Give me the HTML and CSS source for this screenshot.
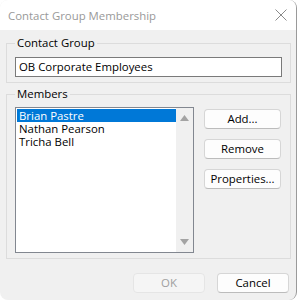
FILE: index.html
```html
<!DOCTYPE HTML>
<html>
<head>
  <meta http-equiv="Content-Type" content="text/html; charset=UTF-8">
  <title>Contact Group Membership</title>
  <link rel="stylesheet" href="styles.css">
</head>
<body>
  <div class="window">
    <div class="titlebar">
      <span class="title">Contact Group Membership</span>
      <svg class="close" width="12" height="12" viewBox="0 0 12 12">
        <path d="M0.5 0.5 L11.5 11.5 M11.5 0.5 L0.5 11.5" stroke="#8a8a8a" stroke-width="1" fill="none"/>
      </svg>
    </div>
    <div class="content">
      <fieldset class="group">
        <legend>Contact Group</legend>
        <div class="textbox">OB Corporate Employees</div>
      </fieldset>

      <fieldset class="group members">
        <legend>Members</legend>
        <div class="members-row">
          <div class="listbox">
            <div class="items">
              <div class="item selected">Brian Pastre</div>
              <div class="item">Nathan Pearson</div>
              <div class="item">Tricha Bell</div>
            </div>
            <div class="scrollbar">
              <svg width="9" height="6" viewBox="0 0 9 6"><path d="M4.5 0 L9 6 L0 6 Z" fill="#a3a3a3"/></svg>
              <svg width="9" height="6" viewBox="0 0 9 6"><path d="M0 0 L9 0 L4.5 6 Z" fill="#a3a3a3"/></svg>
            </div>
          </div>
          <div class="side-buttons">
            <div class="button">Add...</div>
            <div class="button">Remove</div>
            <div class="button">Properties...</div>
          </div>
        </div>
      </fieldset>

      <div class="footer">
        <div class="button wide disabled">OK</div>
        <div class="button wide">Cancel</div>
      </div>
    </div>
  </div>
</body>
</html>
```

FILE: styles.css
```css
body, html {
    margin: 0;
    padding: 0;
    background-color: #fff;
    font-family: "Open Sans", "Noto Sans", sans-serif;
    font-size: 11.4px;
    color: #000;
}

.window {
    width: 296px;
    height: 300px;
    border-right: 1px solid #9a9a9a;
    border-radius: 8px 8px 8px 8px;
    overflow: hidden;
    background-color: #f0f0f0;
    display: flex;
    flex-direction: column;
}

.titlebar {
    height: 30px;
    background-color: #fff;
    display: flex;
    align-items: center;
    justify-content: space-between;
    padding: 0 9px 0 8px;
    flex-shrink: 0;
}

.title {
    color: #999;
}

.content {
    flex: 1;
    padding-top: 6px;
}

.group {
    margin: 0 5px 0 6px;
    padding: 7px 8px 5px 8px;
    border: 1px solid #dcdcdc;
    min-width: 0;
}

.group legend {
    padding: 0 2px;
    margin-left: 0;
    line-height: 14px;
}

.members {
    margin-top: 4px;
    padding-top: 6px;
}

.textbox {
    height: 18px;
    border: 1px solid #7a7a7a;
    background-color: #fff;
    line-height: 18px;
    padding-left: 3px;
}

.members-row {
    display: flex;
    gap: 10px;
}

.listbox {
    width: 177px;
    height: 144px;
    border: 1px solid #828790;
    background-color: #fff;
    display: flex;
}

.items {
    flex: 1;
    padding-top: 1px;
}

.item {
    height: 13px;
    line-height: 13px;
    padding-left: 2px;
    margin-left: 1px;
}

.selected {
    background-color: #0078d7;
    color: #fff;
}

.scrollbar {
    width: 17px;
    background-color: #f0f0f0;
    display: flex;
    flex-direction: column;
    justify-content: space-between;
    align-items: center;
    padding: 7px 0 7px 0;
}

.side-buttons {
    display: flex;
    flex-direction: column;
    gap: 10px;
    padding-top: 2px;
}

.button {
    width: 75px;
    height: 18px;
    line-height: 18px;
    text-align: center;
    background-color: #fdfdfd;
    border: 1px solid #d6d6d6;
    border-bottom-color: #bcbcbc;
    border-radius: 4px;
}

.footer {
    display: flex;
    justify-content: flex-end;
    gap: 12px;
    padding: 14px 7px 0 0;
}

.wide {
    width: 70px;
}

.disabled {
    background-color: #f5f5f5;
    border-color: #e5e5e5;
    color: #a0a0a0;
}
```
